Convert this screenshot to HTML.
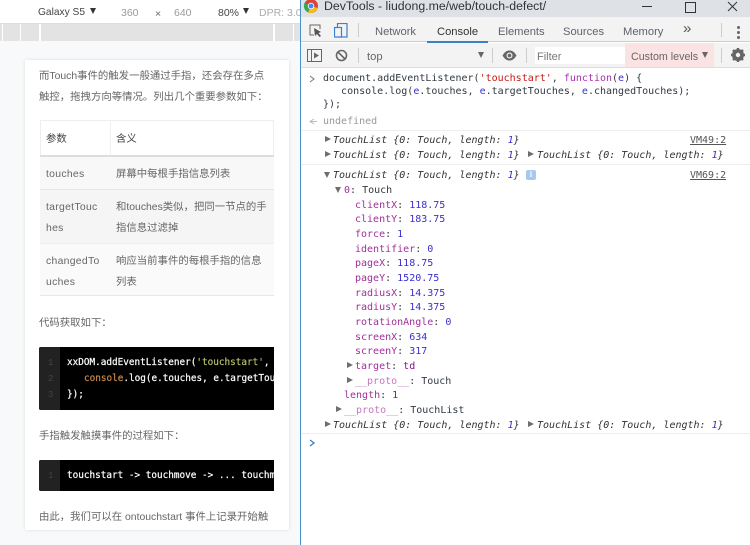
<!DOCTYPE html>
<html><head><meta charset="utf-8"><style>
html,body{margin:0;padding:0;background:#fff}
#r{position:relative;width:750px;height:545px;overflow:hidden;background:#fff;font-family:"Liberation Sans","Noto Sans CJK SC",sans-serif;filter:blur(.3px)}
#r div,#r span.a{position:absolute}
.t{white-space:pre;line-height:14px}
.ui{font-size:11.2px;color:#5f6368}
.cn{font-size:10.4px;color:#666;white-space:pre;line-height:14px;margin-top:2px;font-family:"Liberation Sans","Noto Sans CJK SC",sans-serif}
.la{letter-spacing:.3px}
.m{font-family:"DejaVu Sans Mono",monospace;font-size:10px;color:#303942;white-space:pre;line-height:14px;height:14px;margin-top:1px}
.i{font-style:italic;color:#333}
.p{color:#a0309a}.n{color:#3a2fd0}.k{color:#aa2fb0}.r{color:#c41a16}
.g{color:#999}
.tri{width:0;height:0;border-left:6px solid #6e6e6e;border-top:3.5px solid transparent;border-bottom:3.5px solid transparent}
.trd{width:0;height:0;border-top:6px solid #6e6e6e;border-left:3.5px solid transparent;border-right:3.5px solid transparent}
.c{font-family:"DejaVu Sans Mono",monospace;font-size:9.35px;color:#fff;white-space:pre;line-height:14px;-webkit-text-stroke:.2px currentColor}
.ln{font-family:"Liberation Mono",monospace;font-size:9px;color:#444;line-height:14px}
</style></head><body><div id="r">

<!-- left pane -->
<div style="left:0;top:0;width:300px;height:24px;background:#fff"></div>
<div class="t" style="left:38px;top:6px;font-size:10.2px;color:#444">Galaxy S5</div>
<div style="left:90px;top:8px;border-top:6px solid #333;border-left:3.5px solid transparent;border-right:3.5px solid transparent;width:0;height:0"></div>
<div class="t" style="left:121px;top:6px;font-size:10.5px;color:#999">360</div>
<div class="t" style="left:155px;top:7px;font-size:10.5px;color:#666">×</div>
<div class="t" style="left:174px;top:6px;font-size:10.5px;color:#999">640</div>
<div class="t" style="left:218px;top:6px;font-size:10.5px;color:#444">80%</div>
<div style="left:243px;top:8px;border-top:6px solid #333;border-left:3.5px solid transparent;border-right:3.5px solid transparent;width:0;height:0"></div>
<div class="t" style="left:259px;top:6px;font-size:10.5px;color:#aaa;width:41px;overflow:hidden">DPR: 3.0</div>
<div style="left:0;top:23px;width:300px;height:1px;background:#ddd"></div>

<div style="left:0;top:24px;width:300px;height:17px;background:#e3e3e3"></div>
<div style="left:2px;top:24px;width:1px;height:17px;background:#fff"></div>
<div style="left:20px;top:24px;width:1px;height:17px;background:#fff"></div>
<div style="left:39px;top:24px;width:2px;height:17px;background:#fff"></div>
<div style="left:273px;top:24px;width:2px;height:17px;background:#fff"></div>
<div style="left:293px;top:24px;width:1px;height:17px;background:#fff"></div>

<div style="left:0;top:41px;width:300px;height:504px;background:#f8f9fa"></div>
<div style="left:25px;top:60px;width:264px;height:470px;background:#fff;box-shadow:0 0 3px rgba(0,0,0,.12)"></div>

<div class="cn" style="left:39px;top:68px">而Touch事件的触发一般通过手指，还会存在多点</div>
<div class="cn" style="left:39px;top:89px">触控，拖拽方向等情况。列出几个重要参数如下：</div>

<!-- table -->
<div style="left:40px;top:120px;width:234px;height:36px;background:#fff;border:1px solid #eee;border-bottom:none;box-sizing:border-box"></div>
<div style="left:110px;top:120px;width:1px;height:36px;background:#f0f0f0"></div>
<div style="left:40px;top:155px;width:234px;height:2px;background:#ddd"></div>
<div style="left:40px;top:157px;width:234px;height:33px;background:#f8f8f8"></div>
<div style="left:40px;top:189px;width:234px;height:1px;background:#e6e6e6"></div>
<div style="left:40px;top:190px;width:234px;height:53px;background:#f5f5f5"></div>
<div style="left:40px;top:243px;width:234px;height:53px;background:#fafafa;border-top:1px solid #eee;border-bottom:1px solid #e8e8e8;box-sizing:border-box"></div>
<div class="cn" style="left:46px;top:131px;color:#444">参数</div>
<div class="cn" style="left:116px;top:131px;color:#444">含义</div>
<div class="cn la" style="left:46px;top:166px">touches</div>
<div class="cn" style="left:116px;top:166px">屏幕中每根手指信息列表</div>
<div class="cn la" style="left:46px;top:199px">targetTouc</div>
<div class="cn la" style="left:46px;top:220px">hes</div>
<div class="cn" style="left:116px;top:199px">和touches类似，把同一节点的手</div>
<div class="cn" style="left:116px;top:220px">指信息过滤掉</div>
<div class="cn la" style="left:46px;top:253px">changedTo</div>
<div class="cn la" style="left:46px;top:274px">uches</div>
<div class="cn" style="left:116px;top:253px">响应当前事件的每根手指的信息</div>
<div class="cn" style="left:116px;top:274px">列表</div>

<div class="cn" style="left:39px;top:315px">代码获取如下：</div>

<!-- code 1 -->
<div style="left:39px;top:347px;width:235px;height:63px;background:#000;border-radius:2px 0 0 2px;overflow:hidden">
 <div style="left:0;top:0;width:21px;height:63px;background:#222"></div>
 <div class="ln" style="left:9px;top:9px">1</div>
 <div class="ln" style="left:9px;top:25px">2</div>
 <div class="ln" style="left:9px;top:41px">3</div>
 <div class="c" style="left:28px;top:9px">xxDOM.addEventListener(<span style="color:#b5bd68">'touchstart'</span>,</div>
 <div class="c" style="left:45px;top:25px"><span style="color:#c98a4b">console</span>.log(e.touches, e.targetTouches</div>
 <div class="c" style="left:28px;top:41px">});</div>
</div>

<div class="cn" style="left:39px;top:428px">手指触发触摸事件的过程如下：</div>

<!-- code 2 -->
<div style="left:39px;top:460px;width:235px;height:31px;background:#000;border-radius:2px 0 0 2px;overflow:hidden">
 <div style="left:0;top:0;width:21px;height:31px;background:#222"></div>
 <div class="ln" style="left:9px;top:9px">1</div>
 <div class="c" style="left:28px;top:9px">touchstart -&gt; touchmove -&gt; ... touchmove</div>
</div>

<div class="cn" style="left:39px;top:509px">由此，我们可以在 ontouchstart 事件上记录开始触</div>

<!-- right pane -->
<div style="left:300px;top:0;width:450px;height:545px;background:#fff;border-left:1px solid #4a90c8;box-sizing:border-box"></div>
<div style="left:301px;top:0;width:449px;height:17px;background:#dee1e6"></div>
<svg style="position:absolute;left:303px;top:-2px" width="16" height="16" viewBox="0 0 16 16"><circle cx="8" cy="8" r="7" fill="#d9443a"/><path d="M8 8L14.5 10A7 7 0 0 1 5 14.3Z" fill="#f4c20d"/><path d="M8 8L5 14.3A7 7 0 0 1 1.5 5Z" fill="#3aa757"/><circle cx="8" cy="8" r="3.2" fill="#fff"/><circle cx="8" cy="8" r="2.4" fill="#4285f4"/></svg>
<div class="t" style="left:324px;top:-1px;font-size:12.3px;color:#333">DevTools - liudong.me/web/touch-defect/</div>
<div style="left:642px;top:6px;width:10px;height:1px;background:#333"></div>
<div style="left:685px;top:2px;width:9px;height:9px;border:1px solid #333"></div>
<svg style="position:absolute;left:727px;top:1px" width="11" height="11"><path d="M1 1L10 10M10 1L1 10" stroke="#333" stroke-width="1" fill="none"/></svg>

<div style="left:301px;top:17px;width:449px;height:25px;background:#f3f3f3;border-bottom:1px solid #ccc;box-sizing:border-box"></div>
<svg style="position:absolute;left:309px;top:24px" width="14" height="14" viewBox="0 0 14 14"><path d="M5 11H1V1H11V5" stroke="#666" fill="none"/><path d="M5 4L6 12L8 10L10.500 13L12 12L9.500 9L12 8Z" fill="#555"/></svg>
<svg style="position:absolute;left:334px;top:23px" width="14" height="15" viewBox="0 0 14 15"><rect x="3.500" y=".5" width="9.500" height="13.500" fill="none" stroke="#3b7fd0" stroke-width="1.200"/><rect x=".5" y="4.500" width="7" height="9.500" fill="#f3f3f3" stroke="#3b7fd0" stroke-width="1.200"/></svg>
<div style="left:358px;top:23px;width:1px;height:14px;background:#ccc"></div>
<div class="t ui" style="left:375px;top:25px">Network</div>
<div class="t" style="left:437px;top:25px;font-size:11.2px;color:#333">Console</div>
<div style="left:427px;top:41px;width:61px;height:2px;background:#3b7fc4"></div>
<div class="t ui" style="left:498px;top:25px">Elements</div>
<div class="t ui" style="left:563px;top:25px">Sources</div>
<div class="t ui" style="left:623px;top:25px">Memory</div>
<div class="t" style="left:683px;top:22px;font-size:15px;color:#555">»</div>
<div style="left:721px;top:23px;width:1px;height:14px;background:#ccc"></div>
<div style="left:737px;top:26px;width:3px;height:3px;border-radius:50%;background:#666;box-shadow:0 5px 0 #666,0 10px 0 #666"></div>

<div style="left:301px;top:43px;width:449px;height:25px;background:#f3f3f3;border-bottom:1px solid #ddd;box-sizing:border-box"></div>
<svg style="position:absolute;left:307px;top:49px" width="16" height="14" viewBox="0 0 16 14"><rect x=".5" y=".5" width="14" height="12" fill="none" stroke="#666"/><path d="M4.500 1V13" stroke="#666"/><path d="M7 3.500L12 6.500L7 9.500Z" fill="#666"/></svg>
<svg style="position:absolute;left:335px;top:49px" width="13" height="13" viewBox="0 0 13 13"><circle cx="6.500" cy="6.500" r="5" fill="none" stroke="#666" stroke-width="1.600"/><path d="M3 3L10 10" stroke="#666" stroke-width="1.600"/></svg>
<div style="left:358px;top:48px;width:1px;height:15px;background:#ccc"></div>
<div class="t ui" style="left:367px;top:50px;color:#666">top</div>
<div style="left:478px;top:52px;border-top:6px solid #666;border-left:3.500px solid transparent;border-right:3.500px solid transparent;width:0;height:0"></div>
<div style="left:492px;top:48px;width:1px;height:15px;background:#ccc"></div>
<svg style="position:absolute;left:502px;top:50px" width="15" height="11" viewBox="0 0 15 11"><path d="M.5 5.500C3 1.500 5 .5 7.500 .5S12 1.500 14.500 5.500C12 9.500 10 10.500 7.500 10.500S3 9.500 .5 5.500Z" fill="#666"/><circle cx="7.500" cy="5.500" r="3" fill="#eee"/><circle cx="7.500" cy="5.500" r="1.800" fill="#666"/></svg>
<div style="left:526px;top:48px;width:1px;height:15px;background:#ccc"></div>
<div style="left:535px;top:47px;width:90px;height:17px;background:#fff"></div>
<div class="t" style="left:537px;top:50px;font-size:11px;color:#777">Filter</div>
<div style="left:625px;top:43px;width:89px;height:24px;background:#fbe3e3"></div>
<div class="t" style="left:631px;top:50px;font-size:10.7px;color:#666">Custom levels</div>
<div style="left:702px;top:52px;border-top:6px solid #666;border-left:3.500px solid transparent;border-right:3.500px solid transparent;width:0;height:0"></div>
<div style="left:721px;top:48px;width:1px;height:15px;background:#ccc"></div>
<svg style="position:absolute;left:731px;top:48px" width="14" height="14" viewBox="0 0 14 14"><circle cx="7" cy="7" r="4.500" fill="none" stroke="#666" stroke-width="3"/><path d="M7 0V14M0 7H14M2 2L12 12M12 2L2 12" stroke="#666" stroke-width="2.400"/><circle cx="7" cy="7" r="2.200" fill="#f3f3f3"/></svg>

<!-- console -->
<svg style="position:absolute;left:309px;top:75px" width="7" height="8"><path d="M1 1L5 4L1 7" stroke="#777" fill="none"/></svg>
<div class="m" style="left:323px;top:71px">document.addEventListener(<span class="r">'touchstart'</span>, <span class="k">function</span>(<span class="n">e</span>) {</div>
<div class="m" style="left:323px;top:84px">   console.log(<span class="n">e</span>.touches, <span class="n">e</span>.targetTouches, <span class="n">e</span>.changedTouches);</div>
<div class="m" style="left:323px;top:97px">});</div>
<svg style="position:absolute;left:309px;top:118px" width="8" height="7"><path d="M5 1L1 3.500L5 6M2 3.500H8" stroke="#bbb" fill="none"/></svg>
<div class="m g" style="left:323px;top:114px">undefined</div>
<div style="left:301px;top:130px;width:449px;height:1px;background:#eee"></div>

<div class="tri" style="left:325px;top:136px"></div>
<div class="m i" style="left:333px;top:133px">TouchList {0: Touch, length: <span class="n">1</span>}</div>
<div class="m" style="left:690px;top:133px;color:#555;text-decoration:underline">VM49:2</div>
<div class="tri" style="left:325px;top:151px"></div>
<div class="m i" style="left:333px;top:148px">TouchList {0: Touch, length: <span class="n">1</span>}</div>
<div class="tri" style="left:528px;top:151px"></div>
<div class="m i" style="left:537px;top:148px">TouchList {0: Touch, length: <span class="n">1</span>}</div>
<div style="left:301px;top:164px;width:449px;height:1px;background:#eee"></div>

<div class="trd" style="left:324px;top:172px"></div>
<div class="m i" style="left:333px;top:168px">TouchList {0: Touch, length: <span class="n">1</span>}</div>
<div style="left:526px;top:170px;width:10px;height:10px;background:#a9c8ee;border-radius:2px;color:#fff;font-size:8px;line-height:10px;text-align:center;font-weight:bold">i</div>
<div class="m" style="left:690px;top:168px;color:#555;text-decoration:underline">VM69:2</div>

<div class="trd" style="left:335px;top:187px"></div>
<div class="m" style="left:344px;top:183px"><span class="p">0</span>: Touch</div>
<div class="m" style="left:355px;top:198px"><span class="p">clientX</span>: <span class="n">118.75</span></div>
<div class="m" style="left:355px;top:212px"><span class="p">clientY</span>: <span class="n">183.75</span></div>
<div class="m" style="left:355px;top:227px"><span class="p">force</span>: <span class="n">1</span></div>
<div class="m" style="left:355px;top:242px"><span class="p">identifier</span>: <span class="n">0</span></div>
<div class="m" style="left:355px;top:256px"><span class="p">pageX</span>: <span class="n">118.75</span></div>
<div class="m" style="left:355px;top:271px"><span class="p">pageY</span>: <span class="n">1520.75</span></div>
<div class="m" style="left:355px;top:286px"><span class="p">radiusX</span>: <span class="n">14.375</span></div>
<div class="m" style="left:355px;top:300px"><span class="p">radiusY</span>: <span class="n">14.375</span></div>
<div class="m" style="left:355px;top:315px"><span class="p">rotationAngle</span>: <span class="n">0</span></div>
<div class="m" style="left:355px;top:330px"><span class="p">screenX</span>: <span class="n">634</span></div>
<div class="m" style="left:355px;top:344px"><span class="p">screenY</span>: <span class="n">317</span></div>
<div class="tri" style="left:347px;top:362px"></div>
<div class="m" style="left:355px;top:359px"><span class="p">target</span>: <span style="color:#881280">td</span></div>
<div class="tri" style="left:347px;top:377px"></div>
<div class="m" style="left:355px;top:374px"><span class="p" style="opacity:.65">__proto__</span>: Touch</div>
<div class="m" style="left:344px;top:388px"><span class="p">length</span>: <span class="n">1</span></div>
<div class="tri" style="left:336px;top:406px"></div>
<div class="m" style="left:344px;top:403px"><span class="p" style="opacity:.65">__proto__</span>: TouchList</div>
<div class="tri" style="left:325px;top:421px"></div>
<div class="m i" style="left:333px;top:418px">TouchList {0: Touch, length: <span class="n">1</span>}</div>
<div class="tri" style="left:528px;top:421px"></div>
<div class="m i" style="left:537px;top:418px">TouchList {0: Touch, length: <span class="n">1</span>}</div>
<div style="left:301px;top:433px;width:449px;height:1px;background:#eee"></div>
<svg style="position:absolute;left:309px;top:439px" width="7" height="8"><path d="M1 1L5 4L1 7" stroke="#3b7fd0" stroke-width="1.300" fill="none"/></svg>

</div></body></html>
